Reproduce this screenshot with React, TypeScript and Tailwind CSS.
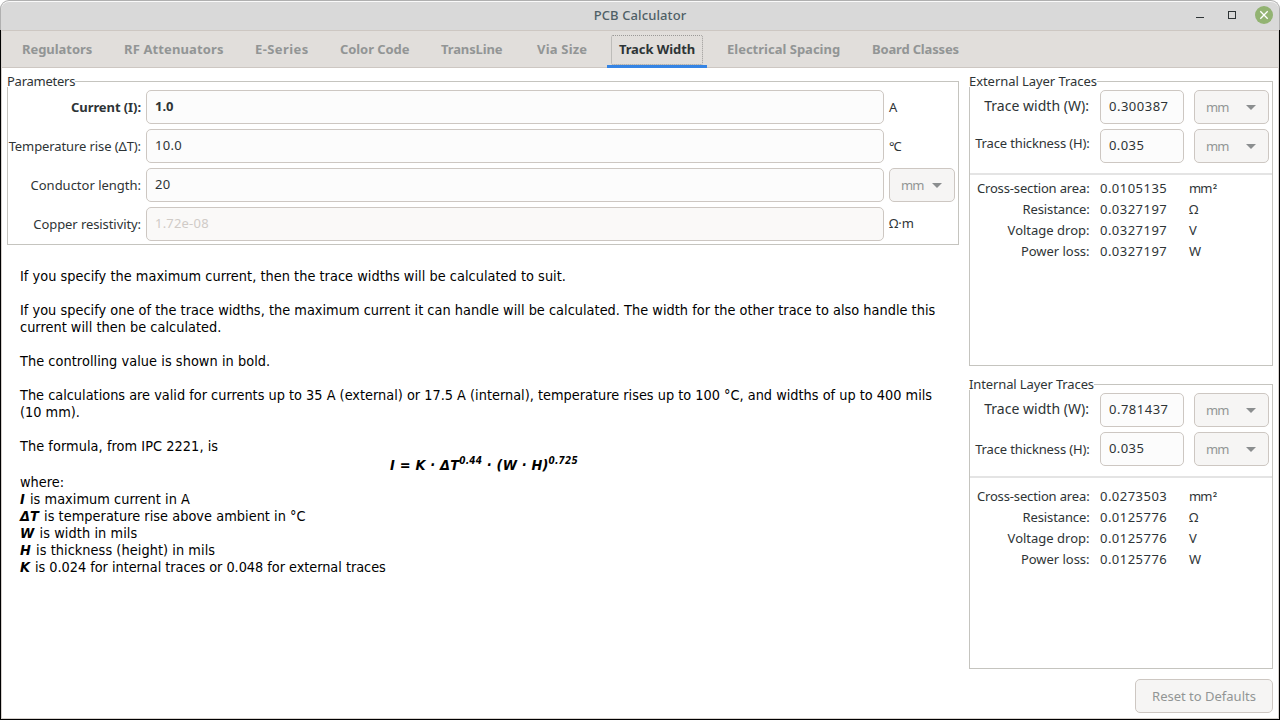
import type { ReactNode } from "react";

type Tab = { label: string; box: string; text: string; active?: boolean };

const tabs: Tab[] = [
  { label: "Regulators", box: "w-[102px]", text: "tracking-[-0.05px]" },
  { label: "RF Attenuators", box: "w-[131px]", text: "tracking-[0.12px]" },
  { label: "E-Series", box: "w-[85px]", text: "tracking-[0.42px]" },
  { label: "Color Code", box: "w-[101px]", text: "tracking-[-0.08px]" },
  { label: "TransLine", box: "w-[96px]", text: "tracking-[-0.12px]" },
  { label: "Via Size", box: "w-[82px]", text: "tracking-[0.2px]" },
  { label: "Track Width", box: "w-[100px] mr-2", text: "tracking-[-0.08px]", active: true },
  { label: "Electrical Spacing", box: "w-[145px]", text: "tracking-normal" },
  { label: "Board Classes", box: "w-[111px]", text: "tracking-[-0.17px]" },
];

function TitleBar() {
  return (
    <header className="relative flex h-[30px] shrink-0 items-center justify-center rounded-t-[9px] border-x border-t border-[#b0b0b0] bg-[#d9d9d9] shadow-[inset_0_1px_0_#fafafa]">
      <h1 className="pb-px text-[13px] font-medium leading-[18px] tracking-[0.1px] text-[#4f5f66]">PCB Calculator</h1>
      <div className="absolute right-[6px] top-[5px] flex items-center gap-[15px]">
        <svg width="16" height="18" viewBox="0 0 16 18">
          <path d="M3 11.5h8" stroke="#2e3436" />
        </svg>
        <svg width="16" height="18" viewBox="0 0 16 18">
          <rect x="4.5" y="5.5" width="7" height="7" fill="none" stroke="#2e3436" />
        </svg>
        <svg width="18" height="18" viewBox="0 0 18 18">
          <circle cx="9" cy="9" r="9" fill="#92b372" />
          <path d="M5.3 5.3l7.4 7.4M12.7 5.3l-7.4 7.4" stroke="#fff" strokeWidth="1.3" />
        </svg>
      </div>
    </header>
  );
}

function TabBar() {
  return (
    <nav className="flex h-[38px] shrink-0 border-y border-[#cdc7c2] bg-[#e1dedb] pl-2">
      {tabs.map((t) =>
        t.active ? (
          <div key={t.label} className={`${t.box} -mb-px flex flex-col items-center border-b-[3px] border-[#3584e4] pt-1`}>
            <span className={`${t.text} flex h-[30px] w-[92px] items-center justify-center rounded-[2px] border border-dotted border-[#9a9997] text-[13px] font-bold text-[#2e3436]`}>
              {t.label}
            </span>
          </div>
        ) : (
          <div key={t.label} className={`${t.box} ${t.text} flex items-center whitespace-nowrap pl-3 pt-0.5 text-[13px] font-bold text-[#929595]`}>
            {t.label}
          </div>
        )
      )}
    </nav>
  );
}

function Group({ title, titleClass, className, children }: { title: string; titleClass: string; className: string; children: ReactNode }) {
  return (
    <fieldset className={`${className} m-0 min-w-0 border border-[#c5c4bf] p-0`}>
      <legend className={`${titleClass} -ml-px h-[11px] whitespace-nowrap bg-white p-0 text-[13px] leading-[11px]`}>{title}</legend>
      {children}
    </fieldset>
  );
}

function Field({ value, className }: { value: string; className: string }) {
  return (
    <div className={`${className} flex h-[34px] shrink-0 items-center rounded-[5px] border border-[#cdc7c2] pb-px pl-2 text-[13px]`}>
      {value}
    </div>
  );
}

function UnitSelect({ className }: { className: string }) {
  return (
    <div className={`${className} flex h-[34px] shrink-0 items-center justify-between rounded-[5px] border border-[#cdc7c2] bg-[#f6f5f4] pl-[11px] pr-3 text-[13px] tracking-[-0.8px] text-[#929595]`}>
      <span className="pt-0.5">mm</span>
      <svg width="10" height="5" viewBox="0 0 10 5">
        <path d="M0 0h10L5 5z" fill="#8b8e8f" />
      </svg>
    </div>
  );
}

function ParamRow({ label, labelClass, value, fieldClass, unit }: { label: string; labelClass: string; value: string; fieldClass: string; unit: ReactNode }) {
  return (
    <div className="flex h-[34px] items-center">
      <div className={`${labelClass} w-[133px] shrink-0 whitespace-nowrap pt-0.5 text-right text-[13px]`}>{label}</div>
      <Field value={value} className={`${fieldClass} mx-[5px] w-[738px]`} />
      <div className="text-[13px]">{unit}</div>
    </div>
  );
}

type Layer = {
  title: string;
  titleClass: string;
  width: string;
  thicknessLabel: string;
  results: [string, string, string][];
  resultsClass: string;
};

const layers: Layer[] = [
  {
    title: "External Layer Traces",
    titleClass: "tracking-[-0.06px]",
    width: "0.300387",
    thicknessLabel: "pb-[5px]",
    resultsClass: "mt-[3px]",
    results: [
      ["Cross-section area:", "0.0105135", "mm²"],
      ["Resistance:", "0.0327197", "Ω"],
      ["Voltage drop:", "0.0327197", "V"],
      ["Power loss:", "0.0327197", "W"],
    ],
  },
  {
    title: "Internal Layer Traces",
    titleClass: "tracking-[-0.12px]",
    width: "0.781437",
    thicknessLabel: "pt-px",
    resultsClass: "mt-2",
    results: [
      ["Cross-section area:", "0.0273503", "mm²"],
      ["Resistance:", "0.0125776", "Ω"],
      ["Voltage drop:", "0.0125776", "V"],
      ["Power loss:", "0.0125776", "W"],
    ],
  },
];

const resultTracking: Record<string, string> = {
  "Cross-section area:": "tracking-[-0.15px]",
  "Resistance:": "tracking-[-0.12px]",
  "Voltage drop:": "tracking-normal",
  "Power loss:": "tracking-[-0.03px]",
};

function Unit({ unit }: { unit: string }) {
  if (unit === "mm²") {
    return (
      <span className="tracking-[-0.8px]">
        mm<span className="ml-px font-['Roboto',sans-serif] text-[12px]">²</span>
      </span>
    );
  }
  return <span>{unit}</span>;
}

function LayerGroup({ layer }: { layer: Layer }) {
  return (
    <Group title={layer.title} titleClass={layer.titleClass} className="h-[290px] w-[304px]">
      <div className="flex flex-col gap-[5px] pt-[3px]">
        <div className="flex h-[34px] items-center">
          <div className="w-[119px] pb-1 text-right text-[14px] tracking-[0.02px]">Trace width (W):</div>
          <Field value={layer.width} className="ml-[11px] w-[84px] bg-[#fcfcfc] tracking-[0.5px]" />
          <UnitSelect className="ml-[10px] w-[75px]" />
        </div>
        <div className="flex h-[34px] items-center">
          <div className={`${layer.thicknessLabel} w-[119.5px] whitespace-nowrap text-right text-[13px] tracking-[-0.15px]`}>Trace thickness (H):</div>
          <Field value="0.035" className="ml-[10.5px] w-[84px] bg-[#fcfcfc] tracking-[0.4px]" />
          <UnitSelect className="ml-[10px] w-[75px]" />
        </div>
      </div>
      <div className="mt-[10px] h-0.5 bg-[#e4e4e4]" />
      <div className={layer.resultsClass}>
        {layer.results.map(([name, value, unit]) => (
          <div key={name} className="flex h-[21px] items-center text-[13px]">
            <span className={`${resultTracking[name]} w-[119.5px] whitespace-nowrap text-right`}>{name}</span>
            <span className="ml-[10.5px] w-[89px] tracking-[0.47px]">{value}</span>
            <Unit unit={unit} />
          </div>
        ))}
      </div>
    </Group>
  );
}

function Term({ children }: { children: ReactNode }) {
  return <b className="mr-px italic">{children}</b>;
}

function Help() {
  return (
    <article className="ml-[13px] mt-[23px] w-[928px] whitespace-nowrap font-['DejaVu_Sans_Condensed','DejaVu_Sans',sans-serif] text-[14.37px] leading-[17px] text-black">
      <p className="tracking-[0.035px]">If you specify the maximum current, then the trace widths will be calculated to suit.</p>
      <p className="mt-[17px] tracking-[0.025px]">
        If you specify one of the trace widths, the maximum current it can handle will be calculated. The width for the other trace to also handle this
        <br />
        current will then be calculated.
      </p>
      <p className="mt-[17px] tracking-[0.06px]">The controlling value is shown in bold.</p>
      <p className="mt-[17px] tracking-[0.004px]">
        The calculations are valid for currents up to 35 A (external) or 17.5 A (internal), temperature rises up to 100 °C, and widths of up to 400 mils
        <br />
        (10 mm).
      </p>
      <p className="mt-[17px] tracking-[0.06px]">The formula, from IPC 2221, is</p>
      <p className="h-[19px] pt-0.5 text-center font-bold italic tracking-[0.18px]">
        I = K · ΔT<sup className="-top-[6px] text-[10px] leading-none">0.44</sup> · (W · H)<sup className="-top-[6px] text-[10px] leading-none">0.725</sup>
      </p>
      <p>where:</p>
      <p className="tracking-[0.04px]"><Term>I</Term> is maximum current in A</p>
      <p className="tracking-[0.04px]"><Term>ΔT</Term> is temperature rise above ambient in °C</p>
      <p className="tracking-[0.08px]"><Term>W</Term> is width in mils</p>
      <p className="tracking-[0.06px]"><Term>H</Term> is thickness (height) in mils</p>
      <p className="tracking-[-0.035px]"><Term>K</Term> is 0.024 for internal traces or 0.048 for external traces</p>
    </article>
  );
}

export default function App() {
  return (
    <div className="flex h-[720px] w-[1280px] flex-col overflow-hidden bg-white font-['Noto_Sans',sans-serif] text-[#2e3436]">
      <TitleBar />
      <div className="flex min-h-0 flex-1 flex-col border-x border-b border-black bg-white">
        <div className="flex min-h-0 flex-1 flex-col border-x border-b border-[#d6d1cd]">
          <TabBar />
          <main className="flex flex-1 gap-[10px] pl-[5px] pt-2">
            <div className="flex w-[952px] flex-col">
              <Group title="Parameters" titleClass="tracking-[-0.25px]" className="h-[169px] w-[952px]">
                <div className="flex flex-col gap-[5px] pt-[3px]">
                  <ParamRow label="Current (I):" labelClass="font-bold tracking-[-0.08px]" value="1.0" fieldClass="bg-[#fcfcfc] font-bold" unit={<span className="inline-block pt-0.5">A</span>} />
                  <ParamRow label="Temperature rise (ΔT):" labelClass="tracking-[-0.1px]" value="10.0" fieldClass="bg-[#fcfcfc] tracking-[0.3px]" unit={<span className="inline-block pt-0.5 tracking-[-1px]">°C</span>} />
                  <ParamRow label="Conductor length:" labelClass="tracking-[-0.01px]" value="20" fieldClass="bg-[#fcfcfc] tracking-[0.4px]" unit={<UnitSelect className="w-[66px]" />} />
                  <ParamRow label="Copper resistivity:" labelClass="tracking-[-0.08px]" value="1.72e-08" fieldClass="bg-[#faf9f8] tracking-[0.2px] text-[#d0cbc7]" unit="Ω·m" />
                </div>
              </Group>
              <Help />
            </div>
            <div className="flex w-[304px] flex-col items-end">
              <div className="flex flex-col gap-[13px]">
                {layers.map((l) => (
                  <LayerGroup key={l.title} layer={l} />
                ))}
              </div>
              <button className="mt-[10px] h-[34px] w-[138px] rounded-[5px] border border-[#cdc7c2] bg-[#f6f5f4] pt-0.5 text-[13px] text-[#929595]">
                Reset to Defaults
              </button>
            </div>
          </main>
        </div>
      </div>
    </div>
  );
}
